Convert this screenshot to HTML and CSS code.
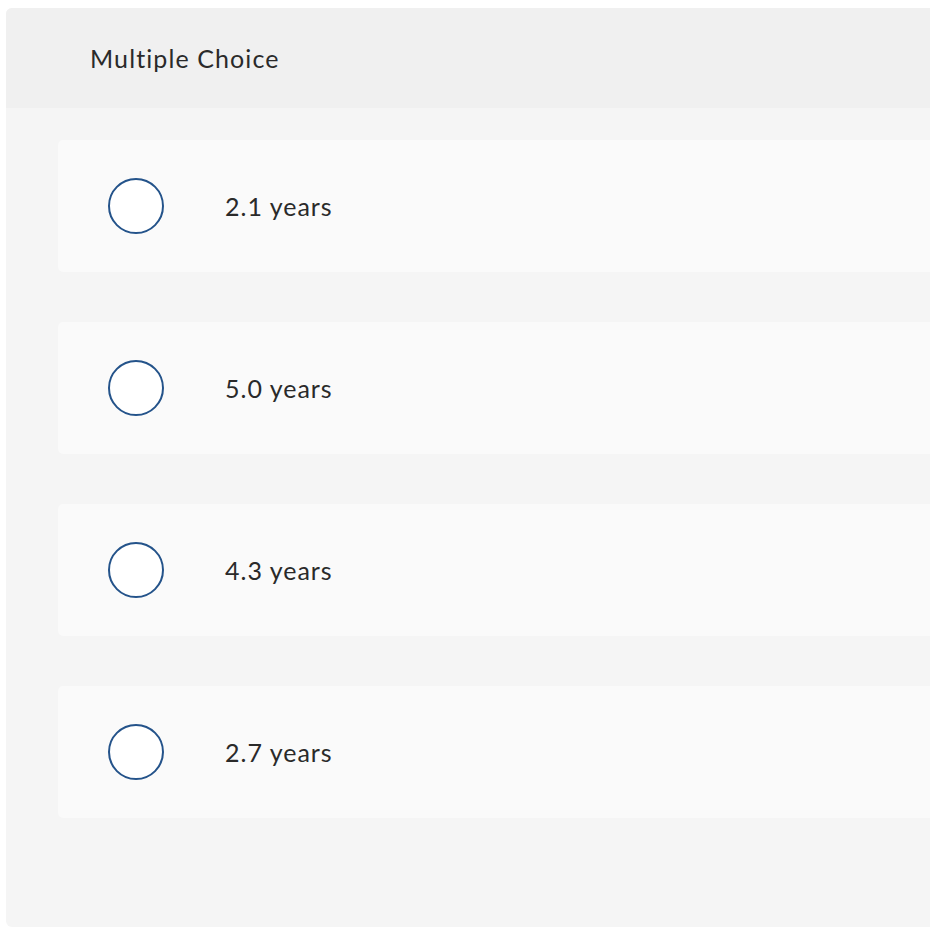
FILE: index.html
```html
<!DOCTYPE html>
<html>
<head>
<meta charset="utf-8">
<link rel="stylesheet" href="styles.css">
</head>
<body>
<div class="panel">
  <div class="header">Multiple Choice</div>
  <div class="choices">
    <div class="choice"><span class="radio"></span><span class="label">2.1 years</span></div>
    <div class="choice"><span class="radio"></span><span class="label">5.0 years</span></div>
    <div class="choice"><span class="radio"></span><span class="label">4.3 years</span></div>
    <div class="choice"><span class="radio"></span><span class="label">2.7 years</span></div>
  </div>
</div>
</body>
</html>
```
FILE: styles.css
```css
html, body {
  overflow: hidden;
}
body {
  margin: 8px 0 0 6px;
  background: #ffffff;
  font-family: Lato, "Open Sans", "Liberation Sans", sans-serif;
  color: #2a2a2a;
}
.panel {
  width: 940px;
  height: 919px;
  background: #f5f5f5;
  border-radius: 6px;
  overflow: hidden;
}
.header {
  height: 100px;
  background: #f0f0f0;
  display: flex;
  align-items: center;
  padding-left: 84px;
  font-size: 25px;
  letter-spacing: 1.1px;
  box-sizing: border-box;
}
.choices {
  display: flex;
  flex-direction: column;
  gap: 50px;
  padding: 32px 0 0 52px;
}
.choice {
  height: 132px;
  background: #fafafa;
  border-radius: 5px 0 0 5px;
  display: flex;
  align-items: center;
  padding-left: 50px;
}
.radio {
  width: 52px;
  height: 52px;
  border: 2px solid #24538a;
  border-radius: 50%;
  background: #ffffff;
  flex: none;
}
.label {
  margin-left: 61px;
  font-size: 25px;
  letter-spacing: 1px;
}
```
